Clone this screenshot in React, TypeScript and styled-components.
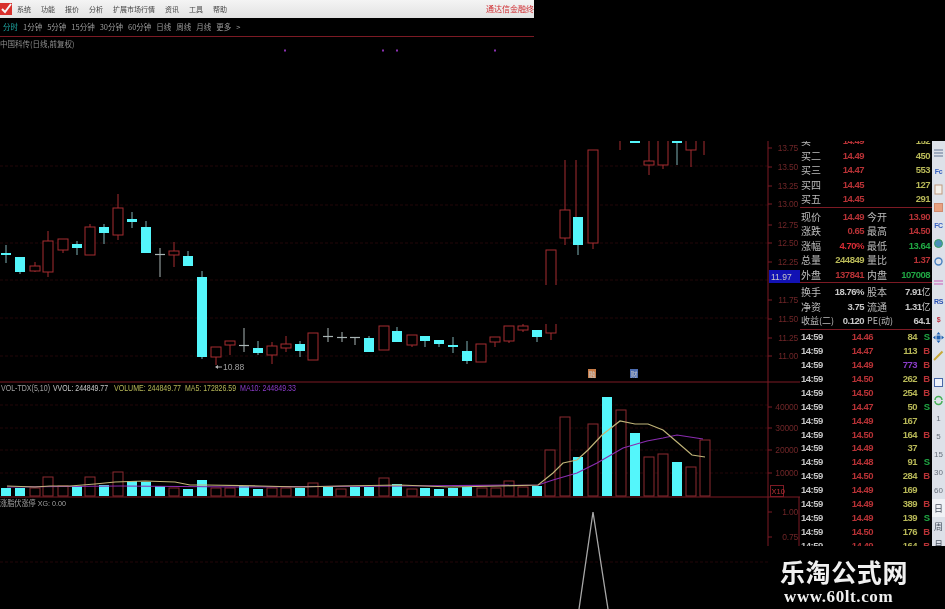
import React from "react";
import styled, { createGlobalStyle } from "styled-components";

const GlobalStyle = createGlobalStyle`
  html, body {
    margin: 0;
    padding: 0;
    background: #000;
  }
`;

const CJK = `"Noto Sans CJK SC", "Liberation Sans", sans-serif`;
const NUM = `"Liberation Sans", "Noto Sans CJK SC", sans-serif`;

const RED = "#a52c30";
const CYAN = "#54f6fb";
const GRID = "#220608";
const RULE = "#7c1a24";

const TONES: Record<string, string> = {
  white: "#c8c8c8",
  gray: "#a0a0a0",
  red: "#b83236",
  bright: "#d82c36",
  green: "#20a844",
  yellow: "#b8b858",
  purple: "#8a3cc8",
  blue: "#5a78d8",
};

const Page = styled.div`
  position: relative;
  display: flex;
  width: 945px;
  height: 609px;
  overflow: hidden;
  background: #000;
  filter: blur(0.6px);
`;

const ChartColumn = styled.div`
  display: flex;
  flex-direction: column;
  width: 800px;
  flex-shrink: 0;
`;

const MenuBar = styled.div`
  display: flex;
  align-items: center;
  gap: 10px;
  box-sizing: border-box;
  width: 534px;
  height: 18px;
  background: linear-gradient(#f4f4f4, #e2e2e2);
  font: 7px/18px ${CJK};
  color: #444;
`;

const Logo = styled.svg`
  width: 12px;
  height: 14px;
  margin-right: -5px;
  margin-left: 0;
  flex-shrink: 0;
`;

const MenuItem = styled.span`
  white-space: nowrap;
`;

const Promo = styled.span`
  width: 48px;
  margin-left: auto;
  overflow: hidden;
  white-space: nowrap;
  font-size: 8px;
  color: #d02c30;
`;

const PeriodBar = styled.div`
  display: flex;
  align-items: center;
  gap: 5px;
  box-sizing: border-box;
  width: 534px;
  height: 19px;
  padding-left: 3px;
  border-bottom: 1px solid ${RULE};
  font: 7.5px/18px ${CJK};
  color: #9c9c9c;
`;

const Period = styled.span<{ $active?: boolean }>`
  white-space: nowrap;
  color: ${(p) => (p.$active ? "#1fa8a4" : "inherit")};
`;

const Title = styled.div`
  height: 12px;
  font: 7.5px/14px ${CJK};
  color: #8e8e8e;
  white-space: nowrap;
`;

const ChartSvg = styled.svg`
  display: block;
  width: 800px;
  height: 560px;
`;

const Label = styled.text<{ $tone?: string; $size?: number }>`
  font-family: ${NUM};
  font-size: ${(p) => p.$size ?? 8}px;
  fill: ${(p) => TONES[p.$tone ?? "gray"]};
`;

const AxisText = styled.text`
  font-family: ${NUM};
  font-size: 8.5px;
  letter-spacing: -0.2px;
  fill: #702628;
  text-anchor: end;
`;

const SidePanel = styled.div`
  display: flex;
  align-items: flex-start;
  flex: 1;
  padding-top: 141px;
`;

const Quote = styled.div`
  width: 132px;
  height: 405px;
  overflow: hidden;
  flex-shrink: 0;
`;

const Section = styled.div<{ $top: number; $rowHeight: number }>`
  box-sizing: content-box;
  margin-top: ${(p) => p.$top}px;
  border-bottom: 1px solid ${RULE};
  & > div {
    height: ${(p) => p.$rowHeight}px;
    line-height: ${(p) => p.$rowHeight}px;
  }
`;

const BookRow = styled.div`
  display: grid;
  grid-template-columns: 28px 35px 66px;
  padding-left: 1px;
`;

const StatRow = styled.div`
  display: grid;
  grid-template-columns: 28px 35px 3px 24px 39px;
  padding-left: 1px;
`;

const TickRow = styled.div`
  display: grid;
  grid-template-columns: 24px 48px 44px 15px;
  height: 13.93px;
  line-height: 13.93px;
  padding-left: 1px;
`;

const Name = styled.span<{ $col?: number; $small?: boolean }>`
  grid-column: ${(p) => p.$col ?? "auto"};
  font: ${(p) => (p.$small ? 9 : 10)}px ${CJK};
  line-height: inherit;
  color: #bcbcbc;
  white-space: nowrap;
`;

const Value = styled.span<{ $tone: string }>`
  font: 700 9.5px ${NUM};
  line-height: inherit;
  letter-spacing: -0.5px;
  text-align: right;
  white-space: nowrap;
  color: ${(p) => TONES[p.$tone]};
`;

const Unit = styled.span`
  font: 9px ${CJK};
`;

const Time = styled.span`
  font: 700 9.5px ${NUM};
  line-height: inherit;
  letter-spacing: -0.5px;
  color: #c4c4c4;
`;

const Side = styled.span<{ $tone: string }>`
  font: 700 9.5px ${NUM};
  line-height: inherit;
  text-align: right;
  padding-right: 2px;
  color: ${(p) => TONES[p.$tone]};
`;

const Rail = styled.div`
  display: flex;
  flex-direction: column;
  box-sizing: border-box;
  width: 13px;
  height: 405px;
  padding-top: 3px;
  overflow: hidden;
  background: #dde1e9;
`;

const RailItem = styled.div<{ $gap?: number; $boxed?: boolean }>`
  display: flex;
  align-items: center;
  justify-content: center;
  flex-shrink: 0;
  height: 18px;
  margin-top: ${(p) => p.$gap ?? 0}px;
  background: ${(p) => (p.$boxed ? "#f0f2f6" : "transparent")};
  font: 8px ${NUM};
  color: #68707c;
`;

const RailCjk = styled.span`
  font: 9px ${CJK};
  color: #4a5260;
`;

const RailBadge = styled.span<{ $color: string }>`
  font: 700 7px ${NUM};
  letter-spacing: -0.4px;
  color: ${(p) => p.$color};
`;

const Glyph = styled.svg`
  display: block;
  width: 11px;
  height: 11px;
`;

const Watermark = styled.div`
  position: absolute;
  left: 780px;
  top: 557px;
  color: #f0f0f0;
  text-align: left;
`;

const WatermarkName = styled.div`
  height: 28px;
  font: 700 25px/28px ${CJK};
  letter-spacing: 0.6px;
`;

const WatermarkUrl = styled.div`
  margin-top: 3px;
  margin-left: 4px;
  font: 700 17px/18px "Liberation Serif", serif;
  letter-spacing: 0.6px;
`;

type Candle = [number, number, number, number, number, "up" | "down" | "flat" | "wick"];

const candles: Candle[] = [
  [6, 253, 255, 245, 263, "down"],
  [20, 257, 272, 257, 274, "down"],
  [35, 266, 271, 262, 272, "up"],
  [48, 241, 272, 231, 277, "up"],
  [63, 239, 250, 239, 253, "up"],
  [77, 244, 248, 241, 255, "down"],
  [90, 227, 255, 224, 255, "up"],
  [104, 227, 233, 224, 244, "down"],
  [118, 208, 235, 194, 240, "up"],
  [132, 219, 222, 212, 228, "down"],
  [146, 227, 253, 221, 253, "down"],
  [160, 254, 255, 248, 277, "flat"],
  [174, 251, 255, 242, 267, "up"],
  [188, 256, 266, 251, 266, "down"],
  [202, 277, 357, 271, 359, "down"],
  [216, 347, 357, 347, 365, "up"],
  [230, 341, 345, 341, 355, "up"],
  [244, 345, 347, 328, 352, "flat"],
  [258, 348, 353, 341, 355, "down"],
  [272, 346, 355, 342, 364, "up"],
  [286, 344, 348, 336, 352, "up"],
  [300, 344, 351, 341, 357, "down"],
  [313, 333, 360, 333, 360, "up"],
  [328, 336, 337, 328, 342, "flat"],
  [342, 337, 338, 332, 342, "flat"],
  [355, 337, 338, 337, 345, "flat"],
  [369, 338, 352, 336, 352, "down"],
  [384, 326, 350, 326, 350, "up"],
  [397, 331, 342, 327, 342, "down"],
  [412, 335, 345, 335, 347, "up"],
  [425, 336, 341, 336, 347, "down"],
  [439, 340, 344, 340, 347, "down"],
  [453, 345, 347, 337, 353, "down"],
  [467, 351, 361, 341, 364, "down"],
  [481, 344, 362, 344, 362, "up"],
  [495, 337, 342, 337, 347, "up"],
  [509, 326, 341, 326, 343, "up"],
  [523, 326, 330, 324, 332, "up"],
  [537, 330, 337, 330, 342, "down"],
  [551, 250, 333, 250, 340, "up"],
  [565, 210, 238, 160, 245, "up"],
  [576, 160, 217, 160, 217, "wick"],
  [578, 217, 245, 217, 255, "down"],
  [593, 150, 243, 150, 249, "up"],
  [620, 130, 130, 130, 150, "wick"],
  [635, 130, 143, 130, 143, "down"],
  [649, 161, 165, 130, 175, "up"],
  [663, 130, 165, 130, 169, "up"],
  [677, 130, 143, 130, 165, "down"],
  [691, 130, 150, 130, 167, "up"],
  [704, 130, 130, 130, 155, "wick"],
];

const volumes: [number, number, boolean][] = [
  [6, 488, false], [20, 488, false], [35, 488, true], [48, 477, true], [63, 486, true],
  [77, 486, false], [90, 477, true], [104, 485, false], [118, 472, true], [132, 481, false],
  [146, 482, false], [160, 486, false], [174, 488, true], [188, 489, false], [202, 480, false],
  [216, 488, true], [230, 488, true], [244, 486, false], [258, 489, false], [272, 488, true],
  [286, 488, true], [300, 488, false], [313, 483, true], [328, 487, false], [341, 489, true],
  [355, 487, false], [369, 487, false], [384, 478, true], [397, 484, false], [412, 489, true],
  [425, 488, false], [439, 489, false], [453, 488, false], [467, 487, false], [482, 488, true],
  [496, 488, true], [509, 481, true], [523, 487, true], [537, 486, false], [550, 450, true],
  [565, 417, true], [578, 457, false], [593, 424, true], [607, 397, false], [621, 410, true],
  [635, 433, false], [649, 457, true], [663, 454, true], [677, 462, false], [691, 467, true],
  [705, 440, true],
];

const flatAverage =
  "7,486 35,487 50,486 70,486 95,484 115,482 145,481 175,482 190,485 205,485 260,486 300,487 340,486 400,485 450,487 500,486 538,485";
const ma5 = `${flatAverage} 553,473 563,463 577,460 588,450 602,435 620,421 635,424 648,424 663,430 677,442 692,455 705,457`;
const ma10 =
  "7,487 120,486 240,487 400,486 538,485 553,480 577,473 597,463 623,448 647,441 663,438 677,435 703,439";

const priceAxis: [string, number][] = [
  ["13.75", 148], ["13.50", 167], ["13.25", 186], ["13.00", 204], ["12.75", 225], ["12.50", 243],
  ["12.25", 262], ["11.75", 300], ["11.50", 319], ["11.25", 338], ["11.00", 356],
  ["40000", 407], ["30000", 428], ["20000", 450], ["10000", 473], ["1.00", 512], ["0.75", 537],
];

const book: [string, string, string][] = [
  ["买一", "14.49", "152"],
  ["买二", "14.49", "450"],
  ["买三", "14.47", "553"],
  ["买四", "14.45", "127"],
  ["买五", "14.45", "291"],
];

const ticks: [string, string, string, string?][] = [
  ["14.46", "84", "S"],
  ["14.47", "113", "B"],
  ["14.49", "773", "B", "purple"],
  ["14.50", "262", "B"],
  ["14.50", "254", "B"],
  ["14.47", "50", "S"],
  ["14.49", "167", ""],
  ["14.50", "164", "B"],
  ["14.49", "37", ""],
  ["14.48", "91", "S"],
  ["14.50", "284", "B"],
  ["14.49", "169", ""],
  ["14.49", "389", "B"],
  ["14.49", "139", "S"],
  ["14.50", "176", "B"],
  ["14.49", "164", "B"],
];

const CandleMark = ({ candle }: { candle: Candle }) => {
  const [x, top, bottom, wickTop, wickBottom, kind] = candle;
  if (kind === "wick") {
    return <line x1={x} x2={x} y1={wickTop} y2={wickBottom} stroke={RED} strokeWidth={1} />;
  }
  if (kind === "flat") {
    return (
      <g stroke="#a8b4b4">
        <line x1={x} x2={x} y1={wickTop} y2={wickBottom} />
        <line x1={x - 5} x2={x + 5} y1={top + 0.5} y2={top + 0.5} strokeWidth={1.2} />
      </g>
    );
  }
  const up = kind === "up";
  return (
    <g>
      <line x1={x} x2={x} y1={wickTop} y2={wickBottom} stroke={up ? RED : "#7fb0b4"} />
      <rect
        x={x - 5}
        y={top}
        width={10}
        height={bottom - top}
        fill={up ? "#000" : CYAN}
        stroke={up ? RED : CYAN}
        strokeWidth={up ? 1 : 0}
      />
    </g>
  );
};

const Chart = () => (
  <ChartSvg viewBox="0 49 800 560">
    <defs>
      <clipPath id="priceWindow">
        <rect x={0} y={141} width={768} height={240} />
      </clipPath>
    </defs>

    {[285, 383, 397, 495].map((x) => (
      <rect key={x} x={x - 1} y={49.5} width={2} height={2} fill="#8a30b0" />
    ))}

    {[166, 205, 243, 280, 318, 356, 405, 428, 450, 473, 562].map((y) => (
      <line key={y} x1={0} x2={768} y1={y} y2={y} stroke={GRID} strokeDasharray="3 2" />
    ))}

    <g clipPath="url(#priceWindow)">
      {candles.map((c) => (
        <CandleMark key={c[0]} candle={c} />
      ))}
      <rect x={545} y={285} width={13} height={39} fill="#000" />
    </g>

    <line x1={216} x2={222} y1={367} y2={367} stroke="#b0b0b0" />
    <path d="M215 367 l3 -2 v4 z" fill="#b0b0b0" />
    <Label x={223} y={370} $size={8.5}>10.88</Label>

    <rect x={588} y={369} width={8} height={9} fill="#c87c48" />
    <Label x={588.5} y={376.5} $size={7} $tone="white">融</Label>
    <rect x={630} y={369} width={8} height={9} fill="#4c6cb0" />
    <Label x={630.5} y={376.5} $size={7} $tone="white">财</Label>

    <line x1={0} x2={800} y1={382} y2={382} stroke={RULE} />
    <line x1={0} x2={800} y1={497} y2={497} stroke={RULE} strokeWidth={1.2} />
    <line x1={768} x2={768} y1={141} y2={546} stroke={RULE} />
    <line x1={799} x2={799} y1={497} y2={546} stroke={RULE} />

    <Label x={1} y={391} $size={9} textLength={49} lengthAdjust="spacingAndGlyphs">VOL-TDX(5,10)</Label>
    <Label x={53} y={391} $size={9} $tone="white" textLength={55} lengthAdjust="spacingAndGlyphs">VVOL: 244849.77</Label>
    <Label x={114} y={391} $size={9} $tone="yellow" textLength={67} lengthAdjust="spacingAndGlyphs">VOLUME: 244849.77</Label>
    <Label x={185} y={391} $size={9} $tone="yellow" textLength={51} lengthAdjust="spacingAndGlyphs">MA5: 172826.59</Label>
    <Label x={240} y={391} $size={9} $tone="purple" textLength={56} lengthAdjust="spacingAndGlyphs">MA10: 244849.33</Label>

    {volumes.map(([x, top, up]) => (
      <rect
        key={x}
        x={x - 5}
        y={top}
        width={10}
        height={496 - top}
        fill={up ? "#000" : CYAN}
        stroke={up ? "#8c2a30" : "none"}
      />
    ))}
    <polyline points={ma10} fill="none" stroke="#8a2cb0" strokeWidth={1.2} />
    <polyline points={ma5} fill="none" stroke="#c0b478" strokeWidth={1.2} />

    <Label x={0} y={506} $tone="gray" textLength={66} lengthAdjust="spacingAndGlyphs">涨脂伏涨停 XG: 0.00</Label>
    <polyline points="579,609 593,512 608,609" fill="none" stroke="#a8a8a8" strokeWidth={1.3} />

    {priceAxis.map(([text, y]) => (
      <g key={text}>
        <line x1={768} x2={772} y1={y} y2={y} stroke={RULE} />
        <AxisText x={798} y={y + 3}>{text}</AxisText>
      </g>
    ))}

    <rect x={769} y={270} width={31} height={13} fill="#1212b4" />
    <Label x={771} y={280} $size={8.5} $tone="white">11.97</Label>

    <rect x={770.5} y={485.5} width={13} height={11} fill="none" stroke={RULE} />
    <Label x={771.5} y={494} $size={7.5} $tone="red">X10</Label>
  </ChartSvg>
);

const BoxGlyph = ({ stroke, fill }: { stroke: string; fill: string }) => (
  <Glyph viewBox="0 0 11 11">
    <rect x={1.5} y={1.5} width={8} height={8} fill={fill} stroke={stroke} />
  </Glyph>
);

const railIcons: React.ReactNode[] = [
  <Glyph viewBox="0 0 11 11" key="list">
    <path d="M1 2h9M1 5h9M1 8h9" stroke="#8a98b0" strokeWidth={1.4} />
  </Glyph>,
  <RailBadge $color="#3a62c0" key="fc">Fc</RailBadge>,
  <Glyph viewBox="0 0 11 11" key="page">
    <rect x={2} y={1} width={7} height={9} fill="#f4f0ea" stroke="#c09a80" />
  </Glyph>,
  <BoxGlyph stroke="#d08a70" fill="#e8a080" key="orange" />,
  <RailBadge $color="#3a62c0" key="fc2">FC</RailBadge>,
  <Glyph viewBox="0 0 11 11" key="disc">
    <circle cx={5.5} cy={5.5} r={4} fill="#4a8fb8" stroke="#3aa060" />
  </Glyph>,
  <Glyph viewBox="0 0 11 11" key="ring">
    <circle cx={5.5} cy={5.5} r={3.5} fill="none" stroke="#4a80c0" strokeWidth={1.4} />
  </Glyph>,
  <Glyph viewBox="0 0 11 11" key="bars">
    <path d="M1 3h9M1 6h9" stroke="#d088c8" strokeWidth={1.5} />
  </Glyph>,
  <RailBadge $color="#2a50b0" key="rs">RS</RailBadge>,
  <RailBadge $color="#c03040" key="dollar">$</RailBadge>,
  <Glyph viewBox="0 0 11 11" key="move">
    <path d="M5.5 0l2 2.5h-4zM5.5 11l2-2.5h-4zM0 5.5l2.5-2v4zM11 5.5l-2.5-2v4z" fill="#2060b0" />
    <rect x={3.5} y={3.5} width={4} height={4} fill="#2060b0" />
  </Glyph>,
  <Glyph viewBox="0 0 11 11" key="pen">
    <path d="M1 10L9.5 1.5" stroke="#c8a838" strokeWidth={2} />
  </Glyph>,
  <BoxGlyph stroke="#4a68a8" fill="#eef2fa" key="doc" />,
  <Glyph viewBox="0 0 11 11" key="cycle">
    <path d="M2 5a3.5 3.5 0 0 1 7 0M9 6a3.5 3.5 0 0 1-7 0" fill="none" stroke="#48b058" strokeWidth={1.5} />
  </Glyph>,
];

const App = () => (
  <Page>
    <GlobalStyle />
    <ChartColumn>
      <MenuBar>
        <Logo viewBox="0 0 12 14">
          <rect x={0} y={1} width={12} height={12} fill="#d8302c" />
          <path d="M2 7l3 3 6-8" fill="none" stroke="#f4f4f4" strokeWidth={2} />
        </Logo>
        {["系统", "功能", "报价", "分析", "扩展市场行情", "资讯", "工具", "帮助"].map((m) => (
          <MenuItem key={m}>{m}</MenuItem>
        ))}
        <Promo>通达信金融终端</Promo>
      </MenuBar>
      <PeriodBar>
        <Period $active>分时</Period>
        {["1分钟", "5分钟", "15分钟", "30分钟", "60分钟", "日线", "周线", "月线", "更多", ">"].map((p) => (
          <Period key={p}>{p}</Period>
        ))}
      </PeriodBar>
      <Title>中国科传(日线,前复权)</Title>
      <Chart />
    </ChartColumn>

    <SidePanel>
      <Quote>
        <Section $top={-7} $rowHeight={14.5}>
          {book.map(([name, price, vol]) => (
            <BookRow key={name}>
              <Name>{name}</Name>
              <Value $tone="red">{price}</Value>
              <Value $tone="yellow">{vol}</Value>
            </BookRow>
          ))}
        </Section>
        <Section $top={2} $rowHeight={14.5}>
          <StatRow>
            <Name>现价</Name>
            <Value $tone="red">14.49</Value>
            <Name $col={4}>今开</Name>
            <Value $tone="red">13.90</Value>
          </StatRow>
          <StatRow>
            <Name>涨跌</Name>
            <Value $tone="red">0.65</Value>
            <Name $col={4}>最高</Name>
            <Value $tone="red">14.50</Value>
          </StatRow>
          <StatRow>
            <Name>涨幅</Name>
            <Value $tone="bright">4.70%</Value>
            <Name $col={4}>最低</Name>
            <Value $tone="green">13.64</Value>
          </StatRow>
          <StatRow>
            <Name>总量</Name>
            <Value $tone="yellow">244849</Value>
            <Name $col={4}>量比</Name>
            <Value $tone="red">1.37</Value>
          </StatRow>
          <StatRow>
            <Name>外盘</Name>
            <Value $tone="red">137841</Value>
            <Name $col={4}>内盘</Name>
            <Value $tone="green">107008</Value>
          </StatRow>
        </Section>
        <Section $top={2} $rowHeight={14.7}>
          <StatRow>
            <Name>换手</Name>
            <Value $tone="white">18.76%</Value>
            <Name $col={4}>股本</Name>
            <Value $tone="white">7.91<Unit>亿</Unit></Value>
          </StatRow>
          <StatRow>
            <Name>净资</Name>
            <Value $tone="white">3.75</Value>
            <Name $col={4}>流通</Name>
            <Value $tone="white">1.31<Unit>亿</Unit></Value>
          </StatRow>
          <StatRow>
            <Name $small>收益(二)</Name>
            <Value $tone="white">0.120</Value>
            <Name $col={4} $small>PE(动)</Name>
            <Value $tone="white">64.1</Value>
          </StatRow>
        </Section>
        {ticks.map(([price, vol, side, tone], i) => (
          <TickRow key={i}>
            <Time>14:59</Time>
            <Value $tone="red">{price}</Value>
            <Value $tone={tone ?? "yellow"}>{vol}</Value>
            <Side $tone={side === "S" ? "green" : "red"}>{side}</Side>
          </TickRow>
        ))}
      </Quote>
      <Rail>
        {railIcons.map((icon, i) => (
          <RailItem key={i} $gap={i === 7 ? 4 : i === 12 ? 9 : 0}>
            {icon}
          </RailItem>
        ))}
        {["1", "5", "15", "30", "60"].map((n) => (
          <RailItem key={n}>{n}</RailItem>
        ))}
        <RailItem $boxed><RailCjk>日</RailCjk></RailItem>
        <RailItem><RailCjk>周</RailCjk></RailItem>
        <RailItem><RailCjk>月</RailCjk></RailItem>
      </Rail>
    </SidePanel>

    <Watermark>
      <WatermarkName>乐淘公式网</WatermarkName>
      <WatermarkUrl>www.60lt.com</WatermarkUrl>
    </Watermark>
  </Page>
);

export default App;
